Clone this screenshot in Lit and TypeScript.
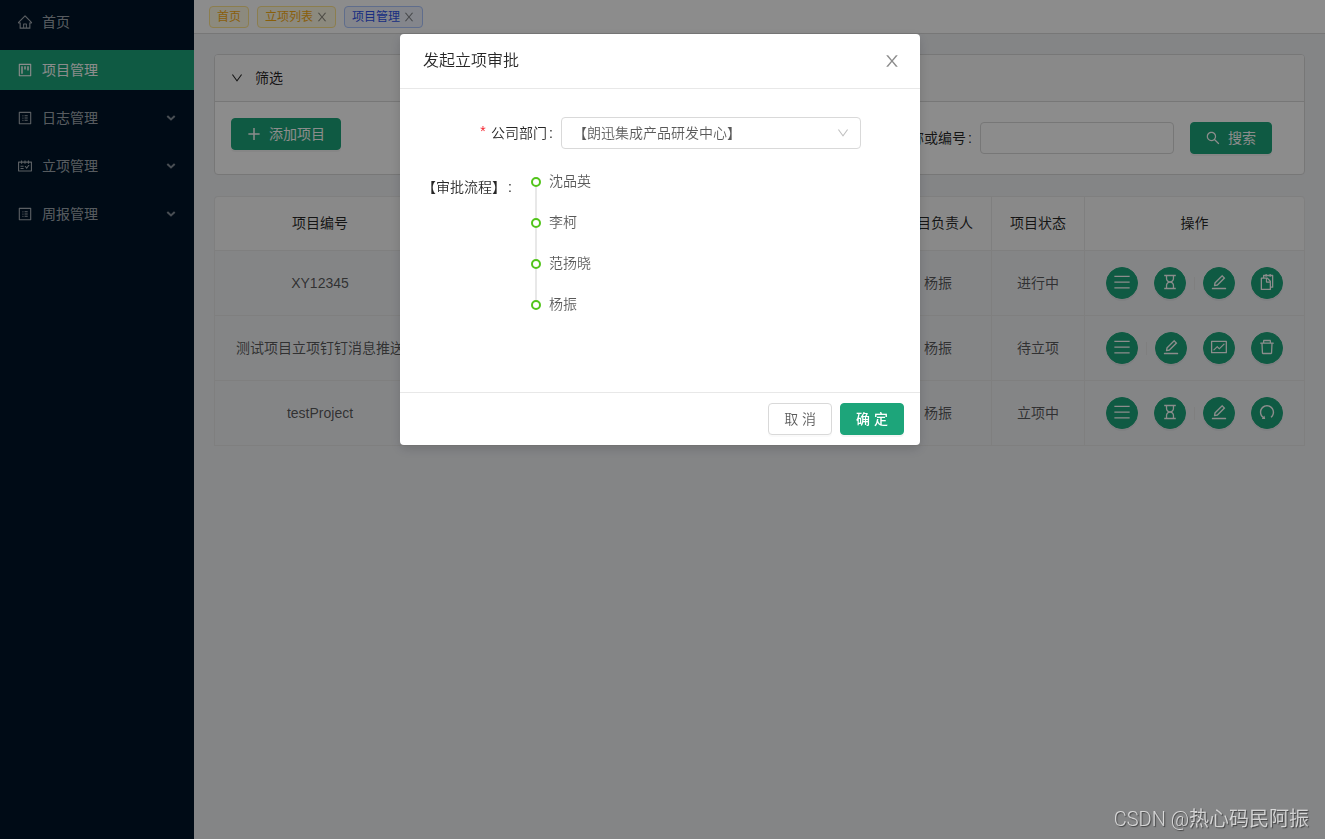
import { LitElement, html, css, svg } from "lit";
import { customElement, property, state } from "lit/decorators.js";
import { classMap } from "lit/directives/class-map.js";

/* Icon outlines on a 1024-unit grid, cropped by a 64-unit margin. */
const ICONS: Record<string, unknown> = {
  home: svg`<path d="M946.5 505L560.1 118.8l-25.9-25.9a31.5 31.5 0 0 0-44.4 0L77.5 505a63.9 63.9 0 0 0-18.8 46c.4 35.2 29.7 63.3 64.9 63.3h42.5V940h691.8V614.3h43.4c17.1 0 33.2-6.7 45.3-18.8a63.6 63.6 0 0 0 18.7-45.3c0-17-6.7-33.1-18.8-45.2zM568 868H456V664h112v204zm217.9-325.7V868H632V640c0-22.1-17.9-40-40-40H432c-22.1 0-40 17.9-40 40v228H238.1V542.3h-96l370-369.7 23.1 23.1L882 542.3h-96.1z"/>`,
  project: svg`<path d="M280 752h80c4.4 0 8-3.6 8-8V280c0-4.4-3.6-8-8-8h-80c-4.4 0-8 3.6-8 8v464c0 4.4 3.6 8 8 8zm192-280h80c4.4 0 8-3.6 8-8V280c0-4.4-3.6-8-8-8h-80c-4.4 0-8 3.6-8 8v184c0 4.4 3.6 8 8 8zm192 72h80c4.4 0 8-3.6 8-8V280c0-4.4-3.6-8-8-8h-80c-4.4 0-8 3.6-8 8v256c0 4.4 3.6 8 8 8zm216-432H144c-17.7 0-32 14.3-32 32v736c0 17.7 14.3 32 32 32h736c17.7 0 32-14.3 32-32V144c0-17.7-14.3-32-32-32zm-40 728H184V184h656v656z"/>`,
  profile: svg`<path d="M880 112H144c-17.7 0-32 14.3-32 32v736c0 17.7 14.3 32 32 32h736c17.7 0 32-14.3 32-32V144c0-17.7-14.3-32-32-32zm-40 728H184V184h656v656zM492 400h184c4.4 0 8-3.6 8-8v-48c0-4.4-3.6-8-8-8H492c-4.4 0-8 3.6-8 8v48c0 4.4 3.6 8 8 8zm0 144h184c4.4 0 8-3.6 8-8v-48c0-4.4-3.6-8-8-8H492c-4.4 0-8 3.6-8 8v48c0 4.4 3.6 8 8 8zm0 144h184c4.4 0 8-3.6 8-8v-48c0-4.4-3.6-8-8-8H492c-4.4 0-8 3.6-8 8v48c0 4.4 3.6 8 8 8zM340 368a40 40 0 1 0 80 0 40 40 0 1 0-80 0zm0 144a40 40 0 1 0 80 0 40 40 0 1 0-80 0zm0 144a40 40 0 1 0 80 0 40 40 0 1 0-80 0z"/>`,
  schedule: svg`<path d="M928 224H768v-56c0-4.4-3.6-8-8-8h-56c-4.4 0-8 3.6-8 8v56H548v-56c0-4.4-3.6-8-8-8h-56c-4.4 0-8 3.6-8 8v56H328v-56c0-4.4-3.6-8-8-8h-56c-4.4 0-8 3.6-8 8v56H96c-17.7 0-32 14.3-32 32v576c0 17.7 14.3 32 32 32h832c17.7 0 32-14.3 32-32V256c0-17.7-14.3-32-32-32zm-40 568H136V296h120v56c0 4.4 3.6 8 8 8h56c4.4 0 8-3.6 8-8v-56h148v56c0 4.4 3.6 8 8 8h56c4.4 0 8-3.6 8-8v-56h148v56c0 4.4 3.6 8 8 8h56c4.4 0 8-3.6 8-8v-56h120v496zM416 496H232c-4.4 0-8 3.6-8 8v48c0 4.4 3.6 8 8 8h184c4.4 0 8-3.6 8-8v-48c0-4.4-3.6-8-8-8zm0 136H232c-4.4 0-8 3.6-8 8v48c0 4.4 3.6 8 8 8h184c4.4 0 8-3.6 8-8v-48c0-4.4-3.6-8-8-8zm308.2-177.4L620.6 598.3l-52.8-73.1c-3-4.2-7.8-6.6-12.9-6.6H500c-6.5 0-10.3 7.4-6.5 12.7l114.1 158.2a15.9 15.9 0 0 0 25.8 0l165-228.7c3.8-5.3 0-12.7-6.5-12.7H737c-5-.1-9.8 2.4-12.8 6.5z"/>`,
  edit: svg`<path d="M257.7 752c2 0 4-.2 6-.5L431.9 722c2-.4 3.9-1.3 5.3-2.8l423.9-423.9a9.96 9.96 0 0 0 0-14.1L694.9 114.9c-1.9-1.9-4.4-2.9-7.1-2.9s-5.2 1-7.1 2.9L256.8 538.8c-1.5 1.5-2.4 3.3-2.8 5.3l-29.5 168.2a33.5 33.5 0 0 0 9.4 29.8c6.6 6.4 14.9 9.9 23.8 9.9zm67.4-174.4L687.8 215l73.3 73.3-362.7 362.6-88.9 15.7 15.6-89zM880 836H144c-17.7 0-32 14.3-32 32v36c0 4.4 3.6 8 8 8h784c4.4 0 8-3.6 8-8v-36c0-17.7-14.3-32-32-32z"/>`,
  search: svg`<path d="M909.6 854.5L649.9 594.8C690.2 542.7 712 479 712 412c0-80.2-31.3-155.4-87.9-212.1-56.6-56.7-132-87.9-212.1-87.9s-155.5 31.3-212.1 87.9C143.2 256.5 112 331.8 112 412c0 80.1 31.3 155.5 87.9 212.1C256.5 680.8 331.8 712 412 712c67 0 130.6-21.8 182.7-62l259.7 259.6a8.2 8.2 0 0 0 11.6 0l43.6-43.5a8.2 8.2 0 0 0 0-11.6zM570.4 570.4C528 612.7 471.8 636 412 636s-116-23.3-158.4-65.6C211.3 528 188 471.8 188 412s23.3-116.1 65.6-158.4C296 211.3 352.2 188 412 188s116.1 23.2 158.4 65.6S636 352.2 636 412s-23.3 116.1-65.6 158.4z"/>`,
  close: svg`<path d="M563.8 512l262.5-312.9c4.4-5.2.7-13.1-6.1-13.1h-79.8c-4.7 0-9.2 2.1-12.3 5.7L511.6 449.8 295.1 191.7c-3-3.6-7.5-5.7-12.3-5.7H203c-6.8 0-10.5 7.9-6.1 13.1L459.4 512 196.9 824.9A7.95 7.95 0 0 0 203 838h79.8c4.7 0 9.2-2.1 12.3-5.7l216.5-258.1 216.5 258.1c3 3.6 7.5 5.7 12.3 5.7h79.8c6.8 0 10.5-7.9 6.1-13.1L563.8 512z"/>`,
  down: svg`<path d="M884 256h-75c-5.1 0-9.9 2.5-12.9 6.6L512 654.2 227.9 262.6c-3-4.1-7.8-6.6-12.9-6.6h-75c-6.5 0-10.3 7.4-6.5 12.7l352.6 486.1c12.8 17.6 39 17.6 51.7 0l352.6-486.1c3.9-5.3.1-12.7-6.4-12.7z"/>`,
  plus: svg`<path d="M464 132h96v332h312v96H560v332h-96V560H152v-96h312z"/>`,
  remove: svg`<path d="M360 184h-8c4.4 0 8-3.6 8-8v8h304v-8c0 4.4 3.6 8 8 8h-8v72h72v-80c0-35.3-28.7-64-64-64H352c-35.3 0-64 28.7-64 64v80h72v-72zm504 72H160c-17.7 0-32 14.3-32 32v32c0 4.4 3.6 8 8 8h60.4l24.7 523c1.6 34.1 29.8 61 63.9 61h454c34.2 0 62.3-26.8 63.9-61l24.7-523H888c4.4 0 8-3.6 8-8v-32c0-17.7-14.3-32-32-32zM731.3 840H292.7l-24.2-512h487l-24.2 512z"/>`,
  fund: svg`<path d="M926 164H94c-17.7 0-32 14.3-32 32v640c0 17.7 14.3 32 32 32h832c17.7 0 32-14.3 32-32V196c0-17.7-14.3-32-32-32zm-40 632H134V236h752v560zm-658.9-82.3c3.1 3.1 8.2 3.1 11.3 0l172.5-172.5 114.4 114.5c3.1 3.1 8.2 3.1 11.3 0l297-297.2c3.1-3.1 3.1-8.2 0-11.3l-36.8-36.8a8.03 8.03 0 0 0-11.3 0L531 565 416.6 450.5a8.03 8.03 0 0 0-11.3 0l-214.9 215a8.03 8.03 0 0 0 0 11.3l36.7 36.9z"/>`,
  hourglass: svg`<path d="M742 318V184h86c4.4 0 8-3.6 8-8v-56c0-4.4-3.6-8-8-8H196c-4.4 0-8 3.6-8 8v56c0 4.4 3.6 8 8 8h86v134c0 81.5 42.4 153.2 106.4 194-64 40.8-106.4 112.5-106.4 194v134h-86c-4.4 0-8 3.6-8 8v56c0 4.4 3.6 8 8 8h632c4.4 0 8-3.6 8-8v-56c0-4.4-3.6-8-8-8h-86V706c0-81.5-42.4-153.2-106.4-194 64-40.8 106.4-112.5 106.4-194zm-72 388v134H354V706c0-42.2 16.4-81.9 46.3-111.7C430.1 564.4 469.8 548 512 548s81.9 16.4 111.7 46.3C653.6 624.1 670 663.8 670 706zm0-388c0 42.2-16.4 81.9-46.3 111.7C593.9 459.6 554.2 476 512 476s-81.9-16.4-111.7-46.3A156.63 156.63 0 0 1 354 318V184h316v134z"/>`,
  snippets: svg`<path d="M832 112H724V72c0-4.4-3.6-8-8-8h-56c-4.4 0-8 3.6-8 8v40H500V72c0-4.4-3.6-8-8-8h-56c-4.4 0-8 3.6-8 8v40H320c-17.7 0-32 14.3-32 32v120h-96c-17.7 0-32 14.3-32 32v632c0 17.7 14.3 32 32 32h512c17.7 0 32-14.3 32-32v-96h96c17.7 0 32-14.3 32-32V144c0-17.7-14.3-32-32-32zM664 888H232V336h218v174c0 22.1 17.9 40 40 40h174v338zm0-402H514V336h.2L664 485.8v.2zm128 274h-56V456L544 264H360v-80h68v32c0 4.4 3.6 8 8 8h56c4.4 0 8-3.6 8-8v-32h152v32c0 4.4 3.6 8 8 8h56c4.4 0 8-3.6 8-8v-32h68v576z"/>`,
  bars: svg`<path d="M84 160h856v70H84zM84 480h856v70H84zM84 800h856v70H84z"/>`,
  undo: svg`<path transform="translate(1024 0) scale(-1 1)" d="M758.2 839.1C851.8 765.9 912 651.9 912 523.9 912 303 733.5 124.3 512.6 124 291.4 123.7 112 302.8 112 523.9c0 125.2 57.5 236.9 147.6 310.2 3.5 2.8 8.6 2.2 11.4-1.3l39.4-50.5c2.7-3.4 2.1-8.3-1.2-11.1-8.1-6.6-15.9-13.7-23.4-21.2a318.64 318.64 0 0 1-68.6-101.7C200.4 609 192 567.1 192 523.9s8.4-85.1 25.1-124.5c16.1-38.1 39.2-72.3 68.6-101.7 29.4-29.4 63.6-52.5 101.7-68.6C426.9 212.4 468.8 204 512 204s85.1 8.4 124.5 25.1c38.1 16.1 72.3 39.2 101.7 68.6 29.4 29.4 52.5 63.6 68.6 101.7 16.7 39.4 25.1 81.3 25.1 124.5s-8.4 85.1-25.1 124.5a318.64 318.64 0 0 1-68.6 101.7c-9.3 9.3-19.1 18-29.3 26L668.2 724a8 8 0 0 0-14.1 3l-39.6 162.2c-1.2 5 2.6 9.9 7.7 9.9l167 .8c6.7 0 10.5-7.7 6.3-12.9l-37.3-47.9z"/>`,
  caret: svg`<path d="M236 356l276 260 276-260" fill="none" stroke="currentColor" stroke-width="150"/>`,
};

@customElement("ui-icon")
class UiIcon extends LitElement {
  @property() name = "";

  static styles = css`
    :host {
      display: inline-flex;
      flex: none;
      width: 1em;
      height: 1em;
    }
    .glyph {
      display: block;
      width: 100%;
      height: 100%;
      fill: currentColor;
      overflow: visible;
    }
  `;

  render() {
    return html`<svg class="glyph" viewBox="64 64 896 896" aria-hidden="true">${ICONS[this.name]}</svg>`;
  }
}

const MENU = [
  { icon: "home", label: "首页", active: false, sub: false },
  { icon: "project", label: "项目管理", active: true, sub: false },
  { icon: "profile", label: "日志管理", active: false, sub: true },
  { icon: "schedule", label: "立项管理", active: false, sub: true },
  { icon: "profile", label: "周报管理", active: false, sub: true },
];

const TABS = [
  { label: "首页", active: false, closable: false },
  { label: "立项列表", active: false, closable: true },
  { label: "项目管理", active: true, closable: true },
];

/* "|" stands for the thin divider between groups of actions. */
const ROWS = [
  { code: "XY12345", owner: "杨振", status: "进行中", actions: ["bars", "hourglass", "|", "edit", "snippets"] },
  { code: "测试项目立项钉钉消息推送", owner: "杨振", status: "待立项", actions: ["bars", "|", "edit", "fund", "remove"] },
  { code: "testProject", owner: "杨振", status: "立项中", actions: ["bars", "hourglass", "|", "edit", "undo"] },
];

const ACTION_NAMES: Record<string, string> = {
  bars: "详情",
  hourglass: "进度",
  edit: "编辑",
  snippets: "复制",
  fund: "立项",
  remove: "删除",
  undo: "撤回",
};

const APPROVERS = ["沈品英", "李柯", "范扬晓", "杨振"];

@customElement("app-root")
class AppRoot extends LitElement {
  @state() private open = true;

  static styles = css`
    :host {
      display: block;
      font: 14px/21px "Liberation Sans", "Noto Sans CJK SC", sans-serif;
      color: rgba(0, 0, 0, 0.65);
    }
    * {
      box-sizing: border-box;
    }
    button,
    input,
    select {
      font: inherit;
      color: inherit;
      margin: 0;
    }
    .layout {
      display: grid;
      grid-template-columns: 194px minmax(0, 1fr);
      min-height: 100vh;
      background: #f0f2f5;
    }

    .sider {
      background: #001529;
      padding-top: 2px;
    }
    .menu {
      display: flex;
      flex-direction: column;
      gap: 8px;
    }
    .entry {
      display: flex;
      align-items: center;
      gap: 10px;
      height: 40px;
      padding: 0 17px 0 18px;
      color: rgba(255, 255, 255, 0.65);
      text-decoration: none;
    }
    .entry.active {
      background: #1da57a;
      color: #fff;
    }
    .arrow {
      margin-left: auto;
      font-size: 12px;
      opacity: 0.8;
    }

    .tabs {
      display: flex;
      gap: 8px;
      height: 34px;
      padding: 6px 15px 5px;
      background: #fff;
      border-bottom: 1px solid #d9d9d9;
    }
    .tab {
      display: flex;
      align-items: center;
      gap: 3px;
      height: 22px;
      padding: 0 7px;
      border: 1px solid #ffe58f;
      border-radius: 4px;
      background: #fffbe6;
      color: #faad14;
      font-size: 12px;
      line-height: 20px;
    }
    .tab.active {
      border-color: #adc6ff;
      background: #f0f5ff;
      color: #2f54eb;
    }
    .tab-close {
      display: flex;
      padding: 0;
      border: 0;
      background: none;
      color: rgba(0, 0, 0, 0.45);
    }

    .content {
      display: flex;
      flex-direction: column;
      gap: 21px;
      padding: 20px;
    }
    .panel {
      border: 1px solid #d9d9d9;
      border-radius: 4px;
      background: #fff;
      overflow: hidden;
    }
    .panel-head {
      display: flex;
      align-items: center;
      gap: 12px;
      width: 100%;
      height: 47px;
      padding: 0 16px;
      border: 0;
      border-bottom: 1px solid #d9d9d9;
      background: #fafafa;
      color: rgba(0, 0, 0, 0.85);
    }
    .panel-head ui-icon {
      font-size: 12px;
    }
    .filters {
      display: flex;
      justify-content: space-between;
      align-items: flex-start;
      padding: 16px;
    }
    .search {
      display: flex;
      align-items: center;
      gap: 16px;
      height: 40px;
      padding-right: 16px;
    }
    .field {
      display: flex;
      align-items: center;
      color: rgba(0, 0, 0, 0.85);
    }
    .colon {
      margin: 0 8px 0 2px;
    }
    .text {
      width: 194px;
      height: 32px;
      padding: 4px 11px;
      border: 1px solid #d9d9d9;
      border-radius: 4px;
      background: #fff;
    }

    .btn {
      display: inline-flex;
      align-items: center;
      justify-content: center;
      gap: 8px;
      height: 32px;
      padding: 0 15px;
      border: 1px solid #d9d9d9;
      border-radius: 4px;
      background: #fff;
      box-shadow: 0 2px 0 rgba(0, 0, 0, 0.02);
      white-space: nowrap;
    }
    .btn.primary {
      border-color: #1da57a;
      background: #1da57a;
      color: #fff;
      font-weight: 400;
      box-shadow: 0 2px 0 rgba(0, 0, 0, 0.04);
    }
    .modal-foot .btn.primary {
      font-weight: 500;
    }
    .btn.round {
      width: 32px;
      padding: 0 0 2px;
      border-radius: 50%;
      font-size: 16px;
    }

    .grid {
      width: 100%;
      table-layout: fixed;
      border-collapse: separate;
      border-spacing: 0;
      border: 1px solid #e8e8e8;
      border-width: 1px 0 0 1px;
      border-radius: 4px 4px 0 0;
      text-align: center;
    }
    .grid th,
    .grid td {
      padding: 16px 0;
      border: 1px solid #e8e8e8;
      border-width: 0 1px 1px 0;
      font-weight: normal;
      white-space: nowrap;
    }
    .grid th {
      background: #fafafa;
      color: rgba(0, 0, 0, 0.85);
    }
    .grid th:first-child {
      border-top-left-radius: 4px;
    }
    .grid th:last-child {
      border-top-right-radius: 4px;
    }
    .col-code {
      width: 211px;
    }
    .col-owner {
      width: 107px;
    }
    .col-status {
      width: 93px;
    }
    .col-actions {
      width: 220px;
    }
    .actions {
      display: flex;
      justify-content: center;
      align-items: center;
      gap: 16px;
    }
    .split {
      width: 1px;
      height: 13px;
      margin: 0 -8px;
      background: #e8e8e8;
    }

    .mask {
      position: fixed;
      inset: 0;
      display: flex;
      justify-content: center;
      align-items: flex-start;
      padding: 34px 5px 0 0;
      background: rgba(0, 0, 0, 0.45);
    }
    .modal {
      width: 520px;
      border-radius: 4px;
      background: #fff;
      box-shadow: 0 4px 12px rgba(0, 0, 0, 0.15);
      font-weight: 350;
    }
    .modal-head {
      display: flex;
      align-items: center;
      justify-content: space-between;
      height: 55px;
      padding: 0 20px 0 23px;
      border-bottom: 1px solid #e8e8e8;
    }
    .title {
      margin: 0;
      color: rgba(0, 0, 0, 0.85);
      font-size: 16px;
      line-height: 22px;
      font-weight: inherit;
    }
    .modal-close {
      display: flex;
      padding: 0;
      border: 0;
      background: none;
      color: rgba(0, 0, 0, 0.45);
      font-size: 16px;
    }
    .modal-body {
      display: flex;
      flex-direction: column;
      gap: 14px;
      padding: 24px 24px 57px 22px;
    }
    .row {
      display: flex;
      align-items: center;
      height: 40px;
      padding-right: 35px;
      justify-content: flex-end;
      color: rgba(0, 0, 0, 0.85);
    }
    .star {
      margin-right: 4px;
      color: #f5222d;
      font-family: "Liberation Mono", monospace;
    }
    .picker {
      display: grid;
      align-items: center;
      width: 300px;
      color: rgba(0, 0, 0, 0.65);
    }
    .picker > * {
      grid-area: 1 / 1;
    }
    .select {
      width: 100%;
      height: 32px;
      padding: 0 11px;
      border: 1px solid #d9d9d9;
      border-radius: 4px;
      background: #fff;
      appearance: none;
    }
    .picker ui-icon {
      justify-self: end;
      margin-right: 12px;
      font-size: 12px;
      color: rgba(0, 0, 0, 0.25);
      pointer-events: none;
    }
    .flow {
      display: flex;
      align-items: flex-start;
      gap: 11px;
    }
    .flow-name {
      color: rgba(0, 0, 0, 0.85);
      line-height: 40px;
    }
    .timeline {
      margin: 0;
      padding: 4px 0 0;
      list-style: none;
    }
    .step {
      display: grid;
      grid-template-columns: 10px auto;
      column-gap: 8px;
      height: 41px;
    }
    .rail {
      display: flex;
      flex-direction: column;
      align-items: center;
      padding-top: 6px;
      margin-bottom: -6px;
    }
    .dot {
      flex: none;
      width: 10px;
      height: 10px;
      border: 2px solid #52c41a;
      border-radius: 50%;
    }
    .tail {
      flex: 1;
      width: 2px;
      background: #e8e8e8;
    }
    .step:last-child .tail {
      display: none;
    }
    .modal-foot {
      display: flex;
      justify-content: flex-end;
      gap: 8px;
      padding: 10px 16px;
      border-top: 1px solid #e8e8e8;
    }

    .credit {
      position: fixed;
      right: 16px;
      bottom: 5px;
      color: rgba(255, 255, 255, 0.7);
      font: 20px/30px Roboto, "Noto Sans CJK SC", sans-serif;
      font-weight: 350;
      text-shadow: 1px 1px 1px rgba(0, 0, 0, 0.5);
    }
  `;

  private close() {
    this.open = false;
  }

  private renderAction(name: string) {
    return name === "|"
      ? html`<span class="split"></span>`
      : html`<button class="btn primary round" aria-label=${ACTION_NAMES[name]}><ui-icon name=${name}></ui-icon></button>`;
  }

  private renderDialog() {
    return html`
      <div class="mask">
        <section class="modal" role="dialog" aria-modal="true" aria-labelledby="dialog-title">
          <header class="modal-head">
            <h2 class="title" id="dialog-title">发起立项审批</h2>
            <button class="modal-close" aria-label="关闭" @click=${this.close}><ui-icon name="close"></ui-icon></button>
          </header>
          <div class="modal-body">
            <div class="row">
              <span class="star">*</span>
              <label for="dept">公司部门</label><span class="colon">:</span>
              <div class="picker">
                <select class="select" id="dept">
                  <option>【朗迅集成产品研发中心】</option>
                </select>
                <ui-icon name="down"></ui-icon>
              </div>
            </div>
            <div class="flow">
              <div class="flow-name">【审批流程】<span class="colon">:</span></div>
              <ul class="timeline">
                ${APPROVERS.map(
                  (name) => html`<li class="step">
                    <span class="rail"><span class="dot"></span><span class="tail"></span></span>
                    <span>${name}</span>
                  </li>`
                )}
              </ul>
            </div>
          </div>
          <footer class="modal-foot">
            <button class="btn" @click=${this.close}>取 消</button>
            <button class="btn primary" @click=${this.close}>确 定</button>
          </footer>
        </section>
      </div>
    `;
  }

  render() {
    return html`
      <div class="layout">
        <aside class="sider">
          <nav class="menu">
            ${MENU.map(
              (m) => html`<a class=${classMap({ entry: true, active: m.active })} href="#">
                <ui-icon name=${m.icon}></ui-icon><span>${m.label}</span>
                ${m.sub ? html`<ui-icon class="arrow" name="caret"></ui-icon>` : ""}
              </a>`
            )}
          </nav>
        </aside>
        <div>
          <div class="tabs">
            ${TABS.map(
              (t) => html`<span class=${classMap({ tab: true, active: t.active })}
                >${t.label}${t.closable
                  ? html`<button class="tab-close" aria-label="关闭"><ui-icon name="close"></ui-icon></button>`
                  : ""}</span
              >`
            )}
          </div>
          <main class="content">
            <section class="panel">
              <button class="panel-head" aria-expanded="true"><ui-icon name="down"></ui-icon>筛选</button>
              <div class="filters">
                <button class="btn primary"><ui-icon name="plus"></ui-icon>添加项目</button>
                <div class="search">
                  <div class="field">
                    <label for="keyword">项目名称或编号</label><span class="colon">:</span>
                    <input class="text" id="keyword" type="text" />
                  </div>
                  <button class="btn primary"><ui-icon name="search"></ui-icon>搜索</button>
                </div>
              </div>
            </section>
            <table class="grid">
              <colgroup>
                <col class="col-code" />
                <col />
                <col class="col-owner" />
                <col class="col-status" />
                <col class="col-actions" />
              </colgroup>
              <thead>
                <tr>
                  <th>项目编号</th>
                  <th></th>
                  <th>项目负责人</th>
                  <th>项目状态</th>
                  <th>操作</th>
                </tr>
              </thead>
              <tbody>
                ${ROWS.map(
                  (r) => html`<tr>
                    <td>${r.code}</td>
                    <td></td>
                    <td>${r.owner}</td>
                    <td>${r.status}</td>
                    <td><div class="actions">${r.actions.map((a) => this.renderAction(a))}</div></td>
                  </tr>`
                )}
              </tbody>
            </table>
          </main>
        </div>
      </div>
      ${this.open ? this.renderDialog() : ""}
      <div class="credit">CSDN @热心码民阿振</div>
    `;
  }
}
